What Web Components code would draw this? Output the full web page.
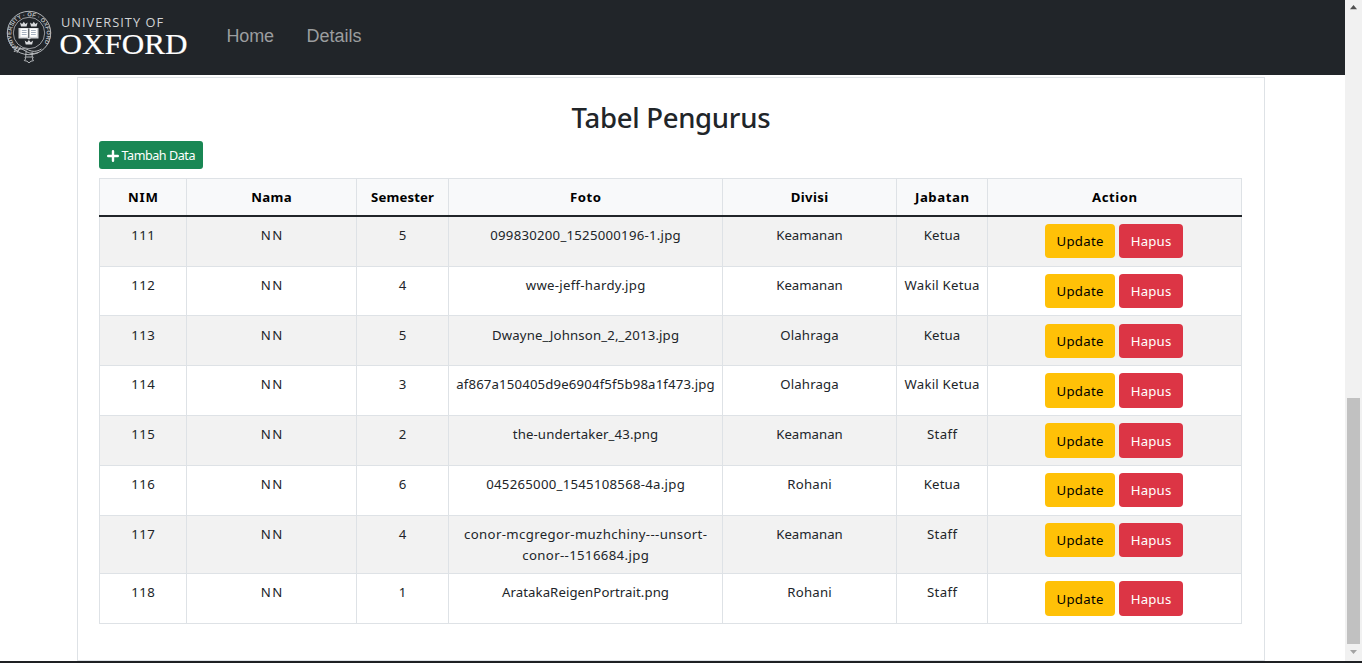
<!DOCTYPE html>
<html lang="id">
<head>
<meta charset="utf-8">
<title>Tabel Pengurus</title>
<style>
html,body{margin:0;height:100%;overflow:hidden;background:#fff}
body{font-family:"Noto Sans","Open Sans",sans-serif;color:#212529}
</style>
</head>
<body>
<app-shell>
  <nav-bar slot="main">
    <oxford-logo slot="brand"></oxford-logo>
    <nav-link><fit-text w="47.5">Home</fit-text></nav-link>
    <nav-link><fit-text w="55">Details</fit-text></nav-link>
  </nav-bar>
  <content-card slot="main">
    <page-title><fit-text w="199">Tabel Pengurus</fit-text></page-title>
    <add-button><fit-text w="74">Tambah Data</fit-text></add-button>
    <staff-table></staff-table>
  </content-card>
  <scroll-rail slot="rail"></scroll-rail>
</app-shell>
<script>
function define(name, html, ready) {
  customElements.define(name, class extends HTMLElement {
    constructor() {
      super();
      this.attachShadow({ mode: 'open' }).innerHTML = html;
    }
    connectedCallback() { if (ready) ready(this, this.shadowRoot); }
  });
}

define('app-shell', `<style>
:host{display:flex;flex-direction:column;height:663px;width:1362px;overflow:hidden}
.view{display:flex;height:661px}
main{width:1345px;height:661px;overflow:hidden}
footer{height:2px;background:#1e2023}
</style><div class="view"><main><slot name="main"></slot></main><slot name="rail"></slot></div><footer></footer>`);

define('nav-bar', `<style>
:host{display:flex;align-items:flex-start;height:75px;background:#212529;box-sizing:border-box}
nav{display:flex;gap:32.5px;padding-left:38.5px;padding-top:24px}
</style><slot name="brand"></slot><nav><slot></slot></nav>`);

define('nav-link', `<style>
:host{display:block;font:18px/24px "Liberation Sans",Arial,sans-serif;color:#9b9d9f}
</style><slot></slot>`);

define('oxford-logo', `<style>
:host{display:block;width:188px;height:75px}svg{display:block}
</style>
<svg width="188" height="75" viewBox="0 0 188 75" fill="none">
  <defs><path id="ring" d="M17.5 47.5A17.7 17.7 0 1 1 41.5 46.5"/></defs>
  <circle cx="29" cy="33" r="21.7" stroke="#c3c6c9" stroke-width=".9"/>
  <circle cx="29" cy="33" r="15.7" stroke="#b5b8bb" stroke-width=".8"/>
  <text font-family="Liberation Sans,sans-serif" font-size="5.8" font-weight="700" fill="#b9bcbf"><textPath href="#ring" textLength="80">UNIVERSITY · OF · OXFORD</textPath></text>
  <path d="M21 26.5l-1-4 2.2 1.6 1.6-2.3 1.6 2.3 2.2-1.6-1 4zM31 26.5l-1-4 2.2 1.6 1.6-2.3 1.6 2.3 2.2-1.6-1 4zM25.7 44.6l-1-4 2.4 1.7 1.8-2.4 1.8 2.4 2.4-1.7-1 4z" fill="#d9dbdd"/>
  <path d="M18.5 28h20v10.5H31l-2 1-2-1h-8.5z" fill="#cfd2d5"/>
  <path d="M20.5 28.6h7.2v8.2h-7.2zM29.9 28.6h7v8.2h-7z" fill="#fff"/>
  <path d="M21.8 30.5h4.8M21.8 32.5h4.8M21.8 34.5h4.8M31 30.5h4.8M31 32.5h4.8M31 34.5h4.8" stroke="#8f9dae" stroke-width=".8"/>
  <path d="M28.7 28.5v9.5" stroke="#30353b" stroke-width=".8"/>
  <path d="M12 47.5c5 .2 9 .4 13 3.2 4.5 3 8 3.4 13.5 1.8M15.5 51.5c5-3.5 9-3.5 13-1.5 4 1.8 8 2 13-1M18 46l-4 6M20.5 46.8l-3.5 6" stroke="#babdc0" stroke-width="1"/>
  <path d="M26.2 50.5l-.5 6.2M32 52l.2 5M25 57h8.2l-.8 2 1.1 1.7-2.5.5-2 1.7-2-1.7-2.7-.6 1.3-1.7z" stroke="#c3c6c9" stroke-width=".9"/>
  <text x="61" y="27" font-family="Open Sans,Noto Sans,sans-serif" font-size="12.8" fill="#d2d4d6" textLength="102" lengthAdjust="spacing">UNIVERSITY OF</text>
  <text x="59.5" y="54.3" font-family="Liberation Serif,serif" font-size="29" fill="#fff" stroke="#fff" stroke-width=".2" textLength="128" lengthAdjust="spacingAndGlyphs">OXFORD</text>
</svg>`);

define('content-card', `<style>
:host{display:flex;flex-direction:column;box-sizing:border-box;width:1188px;height:584px;margin:2px 0 0 77px;border:1px solid #dee2e6;padding:21px 21px 0}
</style><slot></slot>`);

define('page-title', `<style>
:host{display:block;text-align:center;font-size:27.5px;font-weight:500;line-height:38px;height:42px}
</style><slot></slot>`);

define('add-button', `<style>
:host{display:flex;align-items:center;align-self:flex-start;box-sizing:border-box;width:104px;height:28px;padding:1px 0 0 8px;gap:2.5px;border-radius:3px;background:#198754;color:#fff;font-size:12.6px;line-height:20px}
svg{flex:none}
</style><svg width="12" height="12" viewBox="0 0 12 12"><path d="M6 1.2v9.6M1.2 6h9.6" stroke="#fff" stroke-width="2.4" stroke-linecap="round"/></svg><slot></slot>`);

define('action-button', `<style>
:host{display:flex;justify-content:center;box-sizing:border-box;height:var(--button-height);padding-top:calc(var(--button-height) - 27.5px);padding-left:1px;border-radius:4px;line-height:21px}
:host([kind=warning]){width:70px;background:#ffc107;color:#000}
:host([kind=danger]){width:64px;background:#dc3545;color:#fff}
</style><slot></slot>`);

define('table-row', `<style>
:host{display:grid;grid-template-columns:87px 170px 92px 274px 174px 91px 254px;border-left:1px solid #dee2e6;box-sizing:border-box;text-align:center;line-height:21px;background:#fff}
:host([striped]){background:#f2f2f2}
:host([head]){background:#f8f9fa;border-top:1px solid #dee2e6;color:#000;font-weight:700}
::slotted(*){box-sizing:border-box;padding-top:8px;border-right:1px solid #dee2e6;border-bottom:1px solid #dee2e6}
:host([head]) ::slotted(*){border-bottom:0}
:host([drop]) ::slotted(*){padding-top:9px}
::slotted(.actions){display:flex;justify-content:center;align-items:flex-start;gap:4px;padding-right:2px;padding-top:var(--button-top)!important}
</style><slot></slot>`);

const widths = {
  NN: 21.5, Keamanan: 66.5, Olahraga: 58.5, Rohani: 44.5, Ketua: 36.5, 'Wakil Ketua': 75, Staff: 30,
  NIM: 30, Nama: 40.5, Semester: 63, Foto: 31, Divisi: 37.5, Jabatan: 54, Action: 45
};
const fit = (text, w) => `<fit-text w="${w || widths[text]}">${text}</fit-text>`;
const head = ['NIM', 'Nama', 'Semester', 'Foto', 'Divisi', 'Jabatan', 'Action'];
const rows = [
  { h: 50, b: 7, d: ['111', '5', [['099830200_1525000196-1.jpg', 190.5]], 'Keamanan', 'Ketua'] },
  { h: 49, b: 7, d: ['112', '4', [['wwe-jeff-hardy.jpg', 119.5]], 'Keamanan', 'Wakil Ketua'] },
  { h: 50, b: 8, drop: true, d: ['113', '5', [['Dwayne_Johnson_2,_2013.jpg', 187]], 'Olahraga', 'Ketua'] },
  { h: 50, b: 7, bh: 35, d: ['114', '3', [['af867a150405d9e6904f5f5b98a1f473.jpg', 258.5]], 'Olahraga', 'Wakil Ketua'] },
  { h: 50, b: 7, bh: 35, d: ['115', '2', [['the-undertaker_43.png', 145.5]], 'Keamanan', 'Staff'] },
  { h: 50, b: 7, d: ['116', '6', [['045265000_1545108568-4a.jpg', 198.5]], 'Rohani', 'Ketua'] },
  { h: 58, b: 7, d: ['117', '4', [['conor-mcgregor-muzhchiny---unsort-', 243], ['conor--1516684.jpg', 126.5]], 'Keamanan', 'Staff'] },
  { h: 50, b: 7, bh: 35, d: ['118', '1', [['AratakaReigenPortrait.png', 167]], 'Rohani', 'Staff'] }
];
define('staff-table', `<style>
:host{display:block;width:1143px;margin-top:9px;font-size:13.2px}
.rule{height:2px;background:#212529}
</style>
<table-row head style="height:37px">${head.map(t => `<div>${fit(t)}</div>`).join('')}</table-row>
<div class="rule"></div>
${rows.map((r, i) => `<table-row ${i % 2 ? '' : 'striped'} ${r.drop ? 'drop' : ''} style="height:${r.h}px;--button-top:${r.b}px;--button-height:${r.bh || 34}px">
<div>${fit(r.d[0], 23.5)}</div><div>${fit('NN')}</div><div>${r.d[1]}</div>
<div>${r.d[2].map(l => fit(l[0], l[1])).join('<br>')}</div>
<div>${fit(r.d[3])}</div><div>${fit(r.d[4])}</div>
<div class="actions"><action-button kind="warning">${fit('Update', 47)}</action-button><action-button kind="danger">${fit('Hapus', 40.5)}</action-button></div>
</table-row>`).join('')}`);

define('scroll-rail', `<style>
:host{display:flex;flex-direction:column;align-items:center;width:17px;height:661px;background:#f1f1f1}
svg{display:block}
.before{height:381px}.thumb{width:13px;height:246px;background:#c1c1c1}
</style>
<svg width="17" height="17"><path d="M5 9.2h7L8.5 5z" fill="#505050"/></svg>
<div class="before"></div><div class="thumb"></div>
<svg width="17" height="17"><path d="M5 6h7l-3.5 4z" fill="#a3a3a3"/></svg>`);

/* Spaces its letters so that the text is w pixels wide. Defined last, once every
   element around it has given it its font. */
define('fit-text', `<style>:host{display:inline-block;white-space:nowrap}</style><slot></slot>`, el => {
  const w = +el.getAttribute('w');
  const n = el.textContent.length;
  const gap = (w - el.getBoundingClientRect().width) / (n - 1);
  el.style.letterSpacing = gap + 'px';
  el.style.marginRight = -gap + 'px';
});
</script>
</body>
</html>
